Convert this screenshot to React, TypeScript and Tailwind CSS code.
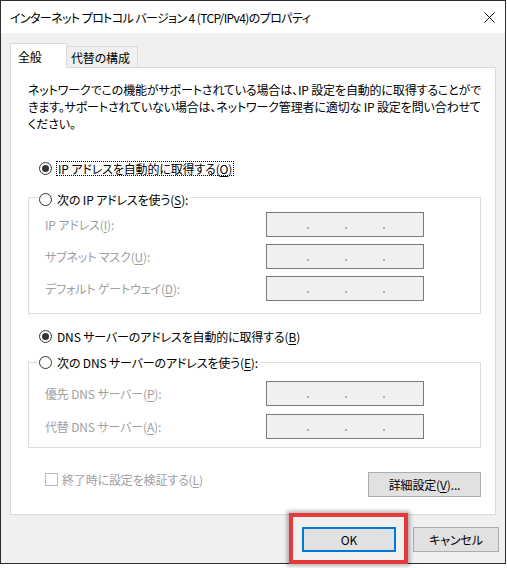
import React from "react";

const Radio = ({ checked }: { checked?: boolean }) => (
  <span className="flex h-[13px] w-[13px] shrink-0 items-center justify-center rounded-full border border-[#333333] bg-white">
    {checked && <span className="h-[7px] w-[7px] rounded-full bg-[#333333]" />}
  </span>
);

const IpBox = () => (
  <div className="flex h-[25px] w-[158px] items-start gap-[36px] border border-[#7a7a7a] bg-[#f0f0f0] pl-[40px] pt-[14px]">
    <span className="h-[2px] w-[2px] bg-[#b4aca0]" />
    <span className="h-[2px] w-[2px] bg-[#b4aca0]" />
    <span className="h-[2px] w-[2px] bg-[#b4aca0]" />
  </div>
);

const Label = ({ text, mn }: { text: string; mn: string }) => (
  <span className="whitespace-nowrap text-[#a0a0a0]">
    {text}(<u className="underline-offset-2">{mn}</u>):
  </span>
);

export default function App() {
  return (
    <div className="h-[568px] w-[507px] bg-white font-['Noto_Sans_CJK_JP',sans-serif] text-[12px] leading-[17px] tracking-[-0.15px] text-black [font-feature-settings:'palt']">
      <div className="flex h-[564px] w-[506px] flex-col border border-[#2d2d2d] bg-[#f0f0f0]">
        {/* title bar */}
        <div className="flex h-[32px] shrink-0 items-center justify-between bg-white pl-[9px] pr-[10px]">
          <span className="whitespace-pre tracking-[-0.6px]">インターネット プロトコル バージョン 4 (TCP/IPv4)のプロパティ</span>
          <svg width="11" height="11" viewBox="0 0 11 11">
            <path d="M0.5 0.5L10.5 10.5M10.5 0.5L0.5 10.5" stroke="#111" strokeWidth="1" />
          </svg>
        </div>

        <div className="pl-[9px] pr-[9px] pt-[10px]">
          {/* tabs */}
          <div className="flex items-end">
            <div className="relative z-10 -mb-px flex h-[25px] w-[57px] items-center border border-b-0 border-[#d9d9d9] bg-white pl-[7px]">
              全般
            </div>
            <div className="flex h-[21px] w-[71px] items-center border border-b-0 border-l-0 border-[#d9d9d9] pl-[4px]">
              代替の構成
            </div>
          </div>

          {/* panel */}
          <div className="flex h-[448px] flex-col border border-[#d9d9d9] bg-white">
            <p className="whitespace-nowrap pl-[17px] pt-[13px]">
              ネットワークでこの機能がサポートされている場合は、IP 設定を自動的に取得することがで
              <br />
              きます。サポートされていない場合は、ネットワーク管理者に適切な IP 設定を問い合わせて
              <br />
              ください。
            </p>

            <div className="ml-[28px] mt-[28px] flex h-[17px] items-center gap-[4px]">
              <Radio checked />
              <span className="whitespace-nowrap border border-dotted border-black px-[1px] leading-[13px]">
                IP アドレスを自動的に取得する(<u className="underline-offset-2">O</u>)
              </span>
            </div>

            <div className="ml-[17px] mt-[20px] w-[453px] border border-[#dcdcdc] pb-[12px]">
              <div className="-mt-[7px] ml-[9px] flex h-[17px] w-fit items-center gap-[5px] bg-white px-[1px] pr-[2px]">
                <Radio />
                <span className="whitespace-nowrap">
                  次の IP アドレスを使う(<u className="underline-offset-2">S</u>):
                </span>
              </div>
              <div className="mt-[4px] grid grid-cols-[221px_158px] items-center gap-y-[7px] pl-[16px]">
                <Label text="IP アドレス" mn="I" />
                <IpBox />
                <Label text="サブネット マスク" mn="U" />
                <IpBox />
                <Label text="デフォルト ゲートウェイ" mn="D" />
                <IpBox />
              </div>
            </div>

            <div className="ml-[28px] mt-[14px] flex h-[17px] items-center gap-[5px]">
              <Radio checked />
              <span className="whitespace-nowrap">
                DNS サーバーのアドレスを自動的に取得する(<u className="underline-offset-2">B</u>)
              </span>
            </div>

            <div className="ml-[17px] mt-[17px] w-[453px] border border-[#dcdcdc] pb-[8px]">
              <div className="-mt-[9px] ml-[9px] flex h-[17px] w-fit items-center gap-[5px] bg-white px-[1px] pr-[2px]">
                <Radio />
                <span className="whitespace-nowrap">
                  次の DNS サーバーのアドレスを使う(<u className="underline-offset-2">E</u>):
                </span>
              </div>
              <div className="mt-[10px] grid grid-cols-[221px_158px] items-center gap-y-[8px] pl-[16px]">
                <Label text="優先 DNS サーバー" mn="P" />
                <IpBox />
                <Label text="代替 DNS サーバー" mn="A" />
                <IpBox />
              </div>
            </div>

            <div className="mt-[24px] flex items-start justify-between pl-[34px] pr-[14px]">
              <div className="-mt-px flex h-[17px] items-center gap-[4px] text-[#a0a0a0]">
                <span className="h-[13px] w-[13px] border border-[#bcbcbc] bg-white" />
                <span className="whitespace-nowrap">
                  終了時に設定を検証する(<u className="underline-offset-2">L</u>)
                </span>
              </div>
              <button className="flex h-[25px] w-[113px] items-center justify-center border border-[#adadad] bg-[#e1e1e1]">
                詳細設定(<u className="underline-offset-2">V</u>)...
              </button>
            </div>
          </div>
        </div>

        {/* footer */}
        <div className="mt-[12px] flex justify-end gap-[17px] pr-[6px]">
          <button className="relative flex h-[25px] w-[94px] items-center justify-center border-2 border-[#0078d7] bg-[#e1e1e1]">
            OK
            <span className="absolute -bottom-[14px] -left-[15px] -right-[14px] -top-[16px] border-[4px] border-[#e5393c] shadow-[0_0_4px_2px_rgba(0,0,0,0.3)]" />
          </button>
          <button className="flex h-[25px] w-[86px] items-center justify-center border border-[#adadad] bg-[#e1e1e1]">
            キャンセル
          </button>
        </div>
      </div>
    </div>
  );
}
